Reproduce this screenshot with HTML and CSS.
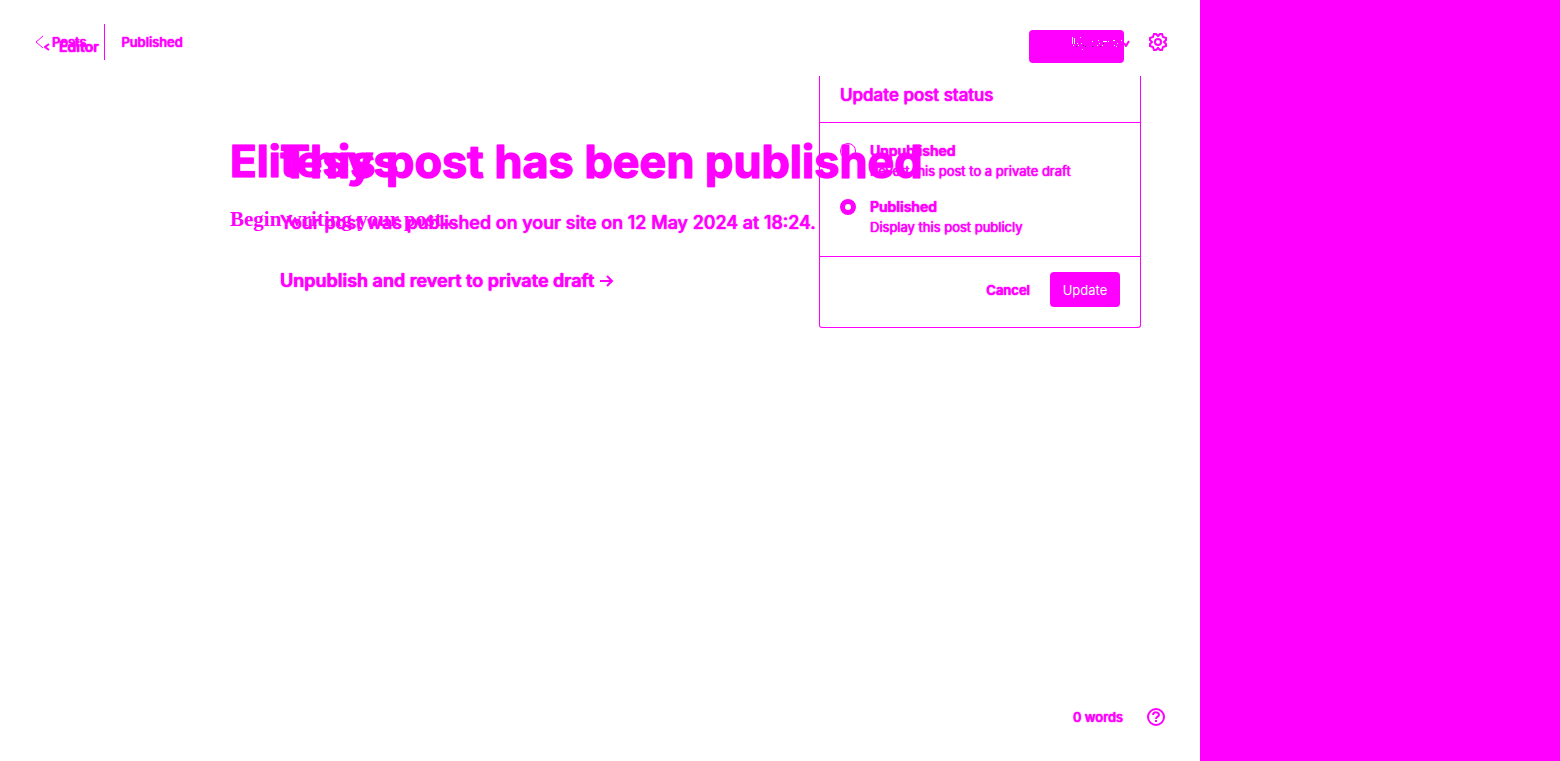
FILE: index.html
```html
<!DOCTYPE html>
<html lang="en">
<head>
<meta charset="utf-8">
<title>Post editor</title>
<link rel="stylesheet" href="styles.css">
</head>
<body>
<div class="app">
  <main class="workspace">
    <section class="editor">
      <header class="topbar">
        <a class="back" href="#posts"><svg width="9" height="14" viewBox="0 0 9 14"><path d="M8 1 1 7l7 6"/></svg>Posts</a>
        <span class="state">Published</span>
        <span class="spacer"></span>
        <button class="settings" aria-label="Settings"><svg width="18" height="18" viewBox="0 0 18 18"><path d="M5 1h2l2 2 2-2h2l1 3 3 1v2l-2 2 2 2v2l-3 1-1 3h-2l-2-2-2 2H5l-1-3-3-1v-2l2-2-2-2V5l3-1z"/><circle cx="9" cy="9" r="3"/></svg></button>
      </header>
      <article class="draft">
        <h1 class="title">Elitesys</h1>
        <p class="placeholder">Begin writing your post...</p>
      </article>
      <footer class="footer">
        <span>0 words</span>
        <button class="help" aria-label="Help"><svg width="18" height="18" viewBox="0 0 18 18"><circle cx="9" cy="9" r="8"/><path class="mark" d="M6 7c0-4 6-3 6 0 0 2-3 1-3 4M9 12v2"/></svg></button>
      </footer>
    </section>

    <section class="result">
      <header class="resultbar">
        <a class="back editor-link" href="#editor"><svg width="6" height="8" viewBox="0 0 6 8"><path d="M5 1 1 4l4 3"/></svg>Editor</a>
        <button class="update-top">
          <span>Update</span>
          <svg class="chevron" width="7" height="8" viewBox="0 0 7 8"><path d="M1 4l2 3 3-5"/></svg>
          <svg class="specks" width="54" height="14" viewBox="0 0 54 14"><path class="light" d="M0 1h1v7H0zM2 2h1v6H2zM8 1h1v1H8zM5 7h1v1H5zM1 9h1v1H1zM6 9h1v1H6zM9 7h1v1H9zM20 5h1v1h-1zM26 4h1v1h-1zM27 7h1v1h-1zM31 5h4v1h-4zM36 5h1v1h-1zM41 4h2v1h-2zM45 7h1v1h-1zM49 4h1v1h-1zM52 5h2v1h-2zM25 9h1v1h-1zM30 9h1v1h-1zM42 9h1v1h-1zM44 10h1v1h-1zM10 13h1v1h-1z"/><path class="dark" d="M4 10h1v1H4zM11 9h1v1h-1zM13 10h1v1h-1zM20 10h1v1h-1zM28 10h1v1h-1zM31 7h1v1h-1z"/></svg>
        </button>
      </header>
      <div class="message">
        <h2 class="headline">This post has been published</h2>
        <p class="detail">Your post was published on your site on 12 May 2024 at 18:24.</p>
        <a class="revert" href="#revert">Unpublish and revert to private draft<svg width="14" height="12" viewBox="0 0 14 12"><path d="M0 6h12M7 1l5 5-5 5"/></svg></a>
      </div>
    </section>

    <form class="popover">
      <h3 class="popover-title">Update post status</h3>
      <div class="options">
        <label class="option"><input type="radio" name="status"><span><b>Unpublished</b><small>Revert this post to a private draft</small></span></label>
        <label class="option"><input type="radio" name="status" checked><span><b>Published</b><small>Display this post publicly</small></span></label>
      </div>
      <div class="actions">
        <button type="button" class="cancel">Cancel</button>
        <button type="button" class="confirm">Update</button>
      </div>
    </form>
  </main>
  <aside class="sidebar"></aside>
</div>
</body>
</html>
```
FILE: styles.css
```css
:root { --ink: #f0f; }
* { box-sizing: border-box; }
body { margin: 0; background: #fff; color: var(--ink); font-family: Inter, sans-serif; font-size: 13px; line-height: 20px; text-shadow: 0 0 1px var(--ink), 0 0 1px var(--ink); }
h1, h2, h3, p { margin: 0; }
a { color: inherit; text-decoration: none; }
button { padding: 0; border: 0; background: none; color: inherit; font: inherit; text-shadow: inherit; }
svg { display: block; fill: none; stroke: var(--ink); stroke-width: 2; }
.app { display: flex; min-height: 100vh; }
.workspace { position: relative; display: grid; grid-template-columns: minmax(0, 1fr); flex: 1; min-width: 0; }
.sidebar { flex: none; width: 360px; background: var(--ink); }
.editor, .result { grid-area: 1 / 1; min-width: 0; }
.editor { display: flex; flex-direction: column; }
.topbar { display: flex; align-items: center; height: 84px; padding: 0 33px 0 35px; font-weight: 500; }
.back { display: flex; align-items: center; gap: 8px; }
.back svg { stroke-width: 1; }
.topbar .back { height: 36px; padding-right: 18px; border-right: 1px solid var(--ink); }
.state { padding-left: 16px; }
.spacer { flex: 1; }
.draft { flex: 1; padding: 49px 0 0 230px; }
.title, .headline { font-weight: 700; -webkit-text-stroke: 1px var(--ink); }
.title { font-size: 44px; line-height: 56px; }
.placeholder { padding-top: 16px; font: 600 21px/28px "Liberation Serif", serif; text-shadow: none; }
.footer { display: flex; justify-content: flex-end; align-items: center; gap: 24px; padding: 0 35px 34px; font-weight: 500; }
.result { position: relative; }
.resultbar { display: flex; justify-content: space-between; align-items: center; height: 93px; padding: 0 76px 0 44px; font-size: 14px; font-weight: 600; }
.editor-link { gap: 9px; }
.editor-link svg { stroke-width: 2; }
.update-top { position: relative; width: 95px; height: 33px; padding-left: 40px; border-radius: 4px; background: var(--ink); text-align: left; font-size: 13px; }
.specks { position: absolute; left: 43px; top: 6px; stroke: none; shape-rendering: crispEdges; }
.light { fill: #fff; }
.dark { fill: #444; }
.chevron { position: absolute; right: -6px; top: 9px; }
.message { padding: 39px 0 0 280px; white-space: nowrap; }
.headline { font-size: 45px; line-height: 60px; }
.detail { padding-top: 17px; font-size: 18px; line-height: 28px; font-weight: 500; }
.revert { display: inline-flex; align-items: center; gap: 6px; margin-top: 30px; font-size: 18px; line-height: 28px; font-weight: 600; }
.popover { position: absolute; right: 59px; top: 76px; width: 322px; border: 1px solid var(--ink); border-top: 0; border-radius: 0 0 3px 3px; }
.popover-title { padding: 5px 20px 13px; border-bottom: 1px solid var(--ink); font-size: 17px; line-height: 28px; font-weight: 500; }
.options { display: flex; flex-direction: column; gap: 16px; padding: 18px 20px 19px; border-bottom: 1px solid var(--ink); }
.option { display: flex; align-items: flex-start; gap: 14px; }
.option input { appearance: none; width: 16px; height: 16px; margin: 2px 0 0; border: 1px solid var(--ink); border-radius: 50%; }
.option input:checked { border-width: 5px; }
.option b, .option small { display: block; font-size: 14px; font-weight: 600; line-height: 20px; }
.option small { font-size: 13px; font-weight: 400; }
.actions { display: flex; justify-content: flex-end; align-items: center; gap: 20px; padding: 15px 20px 20px; font-weight: 600; }
.confirm { width: 70px; height: 35px; border-radius: 4px; background: var(--ink); color: #fff; font-weight: 400; text-shadow: none; }
```
